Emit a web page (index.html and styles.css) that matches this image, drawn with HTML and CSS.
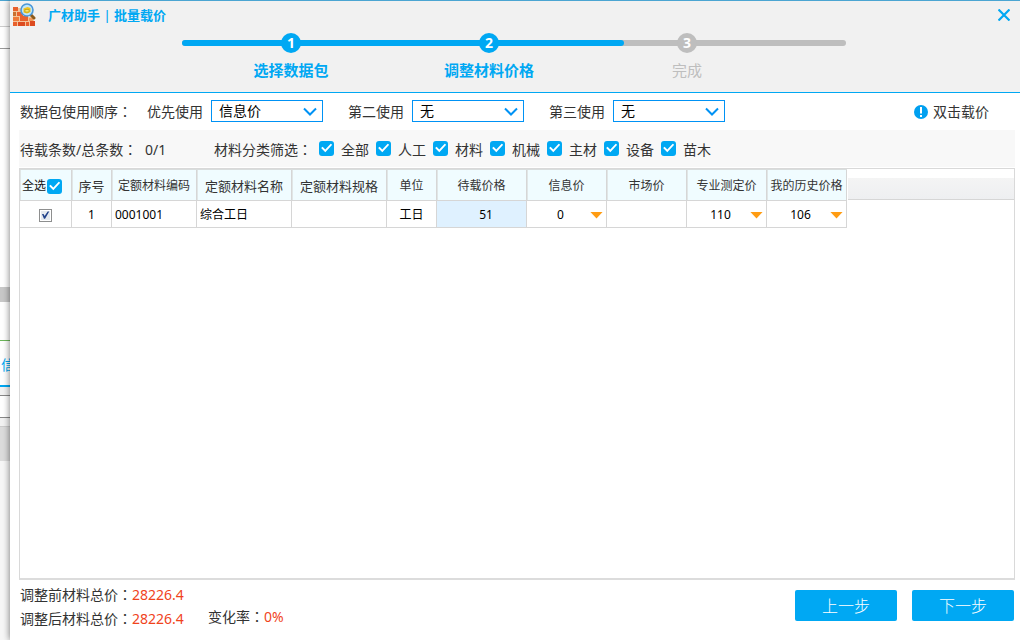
FILE: index.html
```html
<!DOCTYPE html>
<html lang="zh-CN">
<head>
<meta charset="utf-8">
<title>广材助手 | 批量载价</title>
<link rel="stylesheet" href="styles.css">
</head>
<body>
<div class="backdrop">
  <div class="pane pane-menu"></div>
  <div class="pane pane-tools"></div>
  <div class="pane pane-view"></div>
  <div class="pane pane-splitter"></div>
  <div class="pane pane-list"></div>
  <div class="pane pane-tab">信</div>
  <div class="pane pane-gap"></div>
  <div class="pane pane-field"></div>
  <div class="pane pane-gap"></div>
  <div class="pane pane-head"></div>
  <div class="pane pane-rest"></div>
</div>
<main class="dialog">
  <header class="head">
    <div class="titlebar">
      <svg class="logo" width="24" height="24" viewBox="0 0 24 24" aria-hidden="true">
        <rect x="1" y="5" width="9" height="18" fill="#f4c39a"/>
        <rect x="1" y="14" width="21" height="9" fill="#f4c39a"/>
        <g fill="#e8602c">
          <rect x="1" y="4" width="5" height="4"/><rect x="1" y="9" width="3" height="4" fill="#c9702f"/><rect x="5" y="9" width="6" height="4"/>
          <rect x="1" y="14" width="6" height="4" fill="#ee7a3a"/><rect x="8" y="13" width="8" height="5"/><rect x="17" y="15" width="4" height="3" fill="#f19a5a"/>
          <rect x="1" y="19" width="4" height="4"/><rect x="6" y="19" width="7" height="4" fill="#dd4b20"/><rect x="14" y="19" width="3" height="4"/><rect x="18" y="18" width="5" height="5" fill="#dd4b20"/>
        </g>
        <path d="M19 12l3 3" stroke="#8a5a1c" stroke-width="3" stroke-linecap="round"/>
        <circle cx="15" cy="7" r="6" fill="#bfe6fa" stroke="#4a97d8" stroke-width="1.6"/>
        <path d="M11.5 5.500l4-1.500 3 1v4l-3.500 1.500-3.500-1z" fill="#f2c21c"/>
        <path d="M13 6.500h4v2.500h-4z" fill="#fbe46a" stroke="#a89312" stroke-width=".6"/>
      </svg>
      <h1 class="title">广材助手 | 批量载价</h1>
      <button class="close" type="button" aria-label="关闭">
        <svg width="12" height="12" viewBox="0 0 12 12"><path d="M.5.500l11 11M11.500.500l-11 11" stroke="#00a8f3" stroke-width="2.200"/></svg>
      </button>
    </div>
    <div class="stepper">
      <div class="track"><div class="track-done"></div></div>
      <ol class="steps">
        <li class="step"><span class="dot">1</span>选择数据包</li>
        <li class="step"><span class="dot">2</span>调整材料价格</li>
        <li class="step step-todo"><span class="dot">3</span>完成</li>
      </ol>
    </div>
  </header>

  <section class="order">
    <span class="order-label">数据包使用顺序<span class="colon" lang="zh-TW">：</span></span>
    <div class="pick">
      <label for="first">优先使用</label>
      <div class="select-box">
        <select id="first"><option>信息价</option></select>
        <svg class="chevron" width="14" height="9" viewBox="0 0 14 9"><path d="M1 1.500l6 6 6-6" fill="none" stroke="#0092f5" stroke-width="2"/></svg>
      </div>
    </div>
    <div class="pick">
      <label for="second">第二使用</label>
      <div class="select-box">
        <select id="second"><option>无</option></select>
        <svg class="chevron" width="14" height="9" viewBox="0 0 14 9"><path d="M1 1.500l6 6 6-6" fill="none" stroke="#0092f5" stroke-width="2"/></svg>
      </div>
    </div>
    <div class="pick">
      <label for="third">第三使用</label>
      <div class="select-box">
        <select id="third"><option>无</option></select>
        <svg class="chevron" width="14" height="9" viewBox="0 0 14 9"><path d="M1 1.500l6 6 6-6" fill="none" stroke="#0092f5" stroke-width="2"/></svg>
      </div>
    </div>
    <div class="hint">
      <svg width="14" height="14" viewBox="0 0 14 14" aria-hidden="true"><circle cx="7" cy="7" r="7" fill="#00a0f0"/><path d="M6 2h2v6.500h-2zM6 10h2v2h-2z" fill="#fff"/></svg>
      双击载价
    </div>
  </section>

  <section class="filter">
    <span class="count-label">待载条数/总条数<span class="colon" lang="zh-TW">：</span></span>
    <span class="count">0/1</span>
    <span class="filter-label">材料分类筛选<span class="colon" lang="zh-TW">：</span></span>
    <div class="checks">
      <label class="check"><input class="tick" type="checkbox" checked>全部</label>
      <label class="check"><input class="tick" type="checkbox" checked>人工</label>
      <label class="check"><input class="tick" type="checkbox" checked>材料</label>
      <label class="check"><input class="tick" type="checkbox" checked>机械</label>
      <label class="check"><input class="tick" type="checkbox" checked>主材</label>
      <label class="check"><input class="tick" type="checkbox" checked>设备</label>
      <label class="check"><input class="tick" type="checkbox" checked>苗木</label>
    </div>
  </section>

  <section class="grid">
    <table class="prices">
      <colgroup>
        <col class="w-all"><col class="w-no"><col class="w-code"><col class="w-name"><col class="w-name"><col class="w-unit"><col class="w-load"><col class="w-price"><col class="w-price"><col class="w-price"><col class="w-price">
      </colgroup>
      <thead>
        <tr>
          <th><label class="all">全选<input class="tick" type="checkbox" checked></label></th>
          <th class="wide">序号</th><th>定额材料编码</th><th class="wide">定额材料名称</th><th class="wide">定额材料规格</th><th>单位</th><th>待载价格</th><th>信息价</th><th>市场价</th><th>专业测定价</th><th>我的历史价格</th>
        </tr>
      </thead>
      <tbody>
        <tr>
          <td><input class="row-tick" type="checkbox" checked aria-label="选择第1行"></td>
          <td>1</td><td class="left">0001001</td><td class="left">综合工日</td><td></td><td>工日</td><td class="load">51</td>
          <td><div class="price"><span>0</span><button class="drop" type="button" aria-label="展开信息价"></button></div></td>
          <td></td>
          <td><div class="price"><span>110</span><button class="drop" type="button" aria-label="展开专业测定价"></button></div></td>
          <td><div class="price"><span>106</span><button class="drop" type="button" aria-label="展开我的历史价格"></button></div></td>
        </tr>
      </tbody>
    </table>
    <div class="head-fill"></div>
  </section>

  <footer class="foot">
    <div class="totals">
      <div>调整前材料总价<span class="colon" lang="zh-TW">：</span><span class="num">28226.4</span></div>
      <div>调整后材料总价<span class="colon" lang="zh-TW">：</span><span class="num">28226.4</span></div>
    </div>
    <div class="rate">变化率<span class="colon" lang="zh-TW">：</span><span class="num">0%</span></div>
    <div class="actions">
      <button class="btn" type="button">上一步</button>
      <button class="btn" type="button">下一步</button>
    </div>
  </footer>
</main>
</body>
</html>
```

FILE: styles.css
```css
* { box-sizing: border-box; }

body {
  margin: 0;
  min-height: 100vh;
  display: flex;
  background: #fff;
  color: #333;
  font: 14px/24px "Noto Sans", "Noto Sans CJK SC", sans-serif;
}

button, select { font: inherit; }
.colon { font-family: "Noto Sans CJK TC", sans-serif; line-height: 0; }

/* Strip of the main window left of the dialog */
.backdrop {
  width: 10px;
  flex: none;
  display: flex;
  flex-direction: column;
  overflow: hidden;
  border-top: 1px solid #4ba5d2;
}
.pane { flex: none; }
.pane-menu { height: 26px; border-bottom: 1px solid #ccc; background: #fafafa; }
.pane-tools { height: 22px; border-bottom: 1px solid #999; }
.pane-view { height: 238px; }
.pane-splitter { height: 15px; background: #c8c8c8; }
.pane-list { height: 39px; border-bottom: 1px solid #6cb65a; }
.pane-tab {
  height: 46px;
  padding-left: 1px;
  border-bottom: 2px solid #00a8f3;
  color: #00a8f3;
  line-height: 48px;
}
.pane-gap { height: 8px; background: #f2f2f2; }
.pane-field { height: 23px; border: 1px solid #888; border-width: 1px 0; }
.pane-head { height: 35px; border-top: 1px solid #ccc; background: #dcdcdc; }
.pane-rest { flex: 1; background: #f7f7f7; }

.dialog {
  position: relative;
  flex: 1;
  min-width: 0;
  display: flex;
  flex-direction: column;
  border-top: 1px solid #4ba5d2;
  background: #fff;
  box-shadow: 0 0 7px rgba(0, 0, 0, .55);
}

.head {
  height: 92px;
  border-bottom: 1px solid #00a8f3;
  background: #f1f1f1;
}
.titlebar {
  display: flex;
  align-items: center;
  height: 28px;
  padding: 0 10px 0 2px;
}
.logo { margin-right: 12px; flex: none; }
.title {
  flex: 1;
  margin: 0;
  color: #00a8f3;
  font-family: "Open Sans", "Noto Sans CJK SC", sans-serif;
  font-size: 13px;
  font-weight: 600;
}
.close {
  display: flex;
  padding: 0;
  border: 0;
  background: none;
}

.stepper { width: 666px; margin: 11px auto 0; padding-right: 2px; }
.track { height: 6px; border-radius: 3px; background: #bebebe; }
.track-done { width: 442px; height: 6px; border-radius: 3px; background: #00a8f3; }
.steps {
  position: relative;
  display: grid;
  grid-template-columns: repeat(3, 198px);
  margin: -13px 0 0;
  padding: 0 0 0 10px;
  list-style: none;
}
.step {
  display: flex;
  flex-direction: column;
  align-items: center;
  gap: 5px;
  color: #00a8f3;
  font-size: 15px;
  font-weight: 600;
}
.dot {
  width: 20px;
  height: 20px;
  border-radius: 50%;
  background: #00a8f3;
  color: #fff;
  font-size: 14px;
  font-weight: 700;
  line-height: 20px;
  text-align: center;
}
.step-todo { color: #bebebe; font-weight: 400; }
.step-todo .dot { background: #bebebe; }

.order {
  display: flex;
  align-items: center;
  height: 37px;
  padding: 0 31px 0 10px;
}
.order-label { margin-right: 15px; }
.pick {
  display: flex;
  align-items: center;
  gap: 8px;
  margin-right: 25px;
}
.select-box { position: relative; display: flex; margin-bottom: 2px; }
.select-box select {
  appearance: none;
  width: 112px;
  height: 22px;
  padding: 0 24px 0 7px;
  border: 1px solid #0092f5;
  border-radius: 0;
  background: #fff;
  color: #000;
  line-height: 20px;
}
.chevron { position: absolute; top: 7px; right: 6px; pointer-events: none; }
.hint {
  display: flex;
  align-items: center;
  gap: 5px;
  margin-left: auto;
}

.filter {
  display: flex;
  align-items: center;
  height: 37px;
  margin: 0 5px 1px 9px;
  padding: 2px 0 0 1px;
  background: #f8f8f8;
}
.count-label { width: 125px; white-space: nowrap; }
.count { width: 69px; }
.filter-label { margin-right: 7px; }
.checks { display: flex; gap: 7px; }
.check { display: flex; align-items: center; gap: 7px; }

.tick {
  appearance: none;
  position: relative;
  flex: none;
  width: 15px;
  height: 15px;
  margin: 0;
  border-radius: 3px;
  background: #c4c4c4;
}
.check .tick { margin-bottom: 3px; }
.tick:checked { background: #00a8f3; }
.tick:checked::before {
  content: "";
  position: absolute;
  inset: 0;
  background: #fff;
  clip-path: polygon(14% 50%, 24% 42%, 42% 60%, 78% 21%, 88% 29%, 42% 79%);
}

.grid {
  flex: 1;
  display: flex;
  align-items: flex-start;
  margin: 0 5px 0 9px;
  border: 1px solid #d9d9d9;
  border-bottom: 2px solid #dcdcdc;
}
.prices {
  flex: none;
  width: 827px;
  table-layout: fixed;
  border-collapse: separate;
  border-spacing: 0;
  border-top: 1px solid #d9dddd;
  font-size: 12px;
  line-height: 18px;
}
.w-all { width: 52px; }
.w-no { width: 40px; }
.w-code { width: 85px; }
.w-name { width: 95px; }
.w-unit { width: 50px; }
.w-load { width: 90px; }
.w-price { width: 80px; }
.prices th, .prices td {
  padding: 2px 0 0;
  border: solid #d6d6d6;
  border-width: 0 1px 1px 0;
  text-align: center;
  white-space: nowrap;
}
.prices th {
  height: 31px;
  background: #f0fcff;
  box-shadow: inset 1px 0 #e0e6e6;
  font-weight: 400;
}
.prices th.wide { font-size: 13px; }
.prices td { height: 27px; color: #000; }
.prices td.left { padding-left: 3px; text-align: left; }
.prices td.load { background: #dff1ff; padding-left: 9px; }
.all {
  display: flex;
  align-items: center;
  gap: 1px;
  padding-left: 2px;
  color: #111;
}

.row-tick {
  appearance: none;
  position: relative;
  display: block;
  width: 13px;
  height: 13px;
  margin: 0 auto;
  border: 1px solid #8e8f8f;
  background: #e4e9ee;
  box-shadow: inset 0 0 0 1px #fff;
}
.row-tick:checked::before {
  content: "";
  position: absolute;
  inset: 0;
  background: #20418a;
  clip-path: polygon(18% 40%, 32% 40%, 42% 58%, 70% 18%, 84% 18%, 46% 84%, 36% 84%);
}

.price { display: flex; align-items: center; padding-right: 3px; }
.price span { flex: 1; padding-left: 4px; }
.drop {
  width: 13px;
  height: 7px;
  padding: 0;
  border: 0;
  background: #ff9c12;
  clip-path: polygon(0 0, 100% 0, 50% 100%);
}
.head-fill {
  flex: 1;
  height: 31px;
  margin-left: 1px;
  border-top: 9px solid #fff;
  border-bottom: 1px solid #d6d6d6;
  background: linear-gradient(#f4f4f4, #eeeff1);
}

.foot {
  display: flex;
  align-items: flex-start;
  height: 60px;
  padding: 3px 6px 0 10px;
}
.totals { width: 188px; }
.rate { padding-top: 22px; }
.num { color: #f0431c; }
.actions { display: flex; gap: 15px; margin: 7px 0 0 auto; }
.btn {
  width: 102px;
  height: 31px;
  padding: 0;
  border: 0;
  border-radius: 2px;
  background: #00a8f3;
  color: #fff;
  font-size: 16px;
  font-weight: 300;
}
```
